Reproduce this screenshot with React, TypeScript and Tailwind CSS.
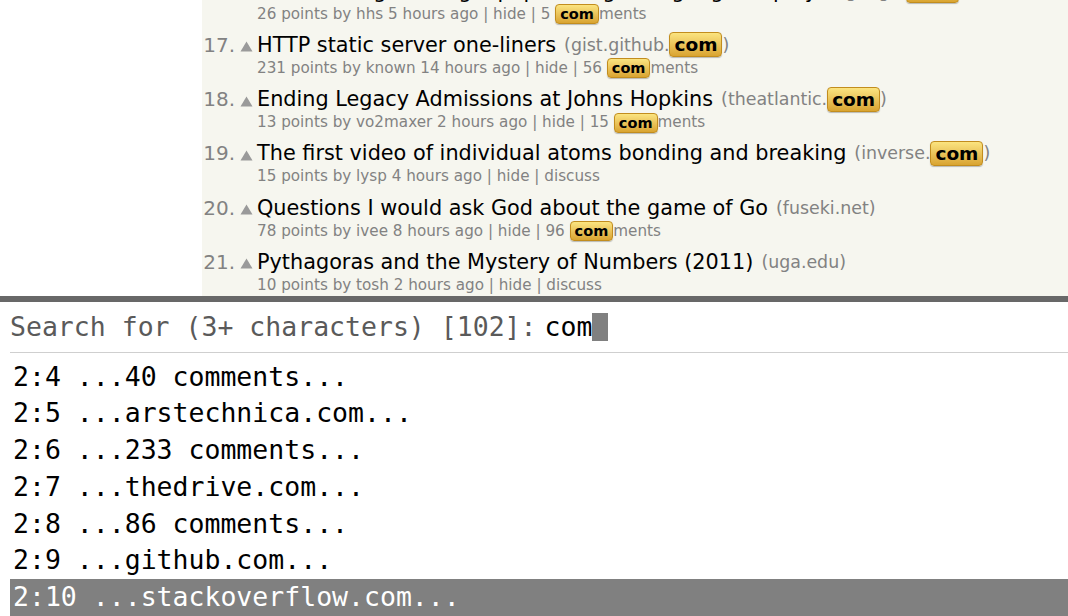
import React from "react";

const sans = { fontFamily: '"DejaVu Sans", Verdana, sans-serif' };
const mono = { fontFamily: '"DejaVu Sans Mono", monospace' };

function TitleBadge() {
  return (
    <span className="inline-block rounded-[4px] border border-[#c28d1e] bg-gradient-to-b from-[#fbe47f] to-[#d9a430] px-[4px] text-[18.5px] font-bold leading-[23px] text-black shadow-[0_1px_1px_rgba(0,0,0,0.25)]">
      com
    </span>
  );
}

function SubBadge() {
  return (
    <span className="inline-block rounded-[4px] border border-[#c28d1e] bg-gradient-to-b from-[#fbe47f] to-[#d9a430] px-[4px] text-[14.5px] font-bold leading-[18px] text-black shadow-[0_1px_1px_rgba(0,0,0,0.25)]">
      com
    </span>
  );
}

type Item = {
  rank: number;
  title: string;
  domain: string;
  badge: boolean;
  sub: string;
  comments: string | null;
};

const items: Item[] = [
  {
    rank: 16,
    title: "Reverse engineering a popular digital signage display",
    domain: "(signage.",
    badge: true,
    sub: "26 points by hhs 5 hours ago | hide | 5 ",
    comments: "ments",
  },
  {
    rank: 17,
    title: "HTTP static server one-liners",
    domain: "(gist.github.",
    badge: true,
    sub: "231 points by known 14 hours ago | hide | 56 ",
    comments: "ments",
  },
  {
    rank: 18,
    title: "Ending Legacy Admissions at Johns Hopkins",
    domain: "(theatlantic.",
    badge: true,
    sub: "13 points by vo2maxer 2 hours ago | hide | 15 ",
    comments: "ments",
  },
  {
    rank: 19,
    title: "The first video of individual atoms bonding and breaking",
    domain: "(inverse.",
    badge: true,
    sub: "15 points by lysp 4 hours ago | hide | discuss",
    comments: null,
  },
  {
    rank: 20,
    title: "Questions I would ask God about the game of Go",
    domain: "(fuseki.net)",
    badge: false,
    sub: "78 points by ivee 8 hours ago | hide | 96 ",
    comments: "ments",
  },
  {
    rank: 21,
    title: "Pythagoras and the Mystery of Numbers (2011)",
    domain: "(uga.edu)",
    badge: false,
    sub: "10 points by tosh 2 hours ago | hide | discuss",
    comments: null,
  },
];

function Arrow() {
  return (
    <svg width="13" height="11" viewBox="0 0 13 11" className="mt-[4px]">
      <polygon points="6.5,0.5 12.5,10.5 0.5,10.5" fill="#9a9a9a" />
    </svg>
  );
}

function NewsItem({ it }: { it: Item }) {
  return (
    <div className="mb-[7.25px]">
      <div className="flex h-[30px] items-center whitespace-nowrap">
        <div className="w-[33px] text-right text-[20px] leading-[30px] text-[#828282]">
          {it.rank}.
        </div>
        <div className="flex w-[22px] justify-center">
          <Arrow />
        </div>
        <div className="flex items-center text-[20.8px] leading-[30px] text-black">
          <span>{it.title}</span>
          <span className="ml-[8px] flex items-center text-[17.4px] text-[#828282]">
            {it.domain}
            {it.badge && (
              <>
                <TitleBadge />
                <span>)</span>
              </>
            )}
          </span>
        </div>
      </div>
      <div className="ml-[55px] flex h-[17px] items-center whitespace-nowrap text-[15.2px] leading-[17px] text-[#828282]">
        <span className="whitespace-pre">{it.sub}</span>
        {it.comments && (
          <>
            <SubBadge />
            <span>{it.comments}</span>
          </>
        )}
      </div>
    </div>
  );
}

const results = [
  "2:4 ...40 comments...",
  "2:5 ...arstechnica.com...",
  "2:6 ...233 comments...",
  "2:7 ...thedrive.com...",
  "2:8 ...86 comments...",
  "2:9 ...github.com...",
  "2:10 ...stackoverflow.com...",
];

export default function App() {
  return (
    <div className="h-[616px] w-[1068px] overflow-hidden bg-white">
      <div className="flex h-[296px] overflow-hidden bg-white" style={sans}>
        <div className="w-[202px] shrink-0" />
        <div className="flex-1 overflow-hidden bg-[#f6f6ef]">
          <div className="mt-[-24.5px]">
            {items.map((it) => (
              <NewsItem key={it.rank} it={it} />
            ))}
          </div>
        </div>
      </div>
      <div className="h-[6px] bg-[#686868]" />
      <div className="pl-[10px]" style={mono}>
        <div className="mt-[7px] flex h-[36px] items-center whitespace-pre text-[26.5px] leading-[36px]">
          <span className="text-[#5a5a5a]">Search for (3+ characters) [102]:</span>
          <span className="ml-[8px] text-black">com</span>
          <span className="h-[28px] w-[16px] bg-[#808080]" />
        </div>
        <div className="mt-[7px] h-[1px] bg-[#cfcfcf]" />
        <div className="mt-[5.5px]">
          {results.map((r, i) => (
            <div
              key={r}
              className={
                i === results.length - 1
                  ? "h-[36.75px] whitespace-pre bg-[#808080] pl-[3px] text-[26.5px] leading-[36.75px] text-white"
                  : "h-[36.75px] whitespace-pre pl-[3px] text-[26.5px] leading-[36.75px] text-black"
              }
            >
              {r}
            </div>
          ))}
        </div>
      </div>
    </div>
  );
}
